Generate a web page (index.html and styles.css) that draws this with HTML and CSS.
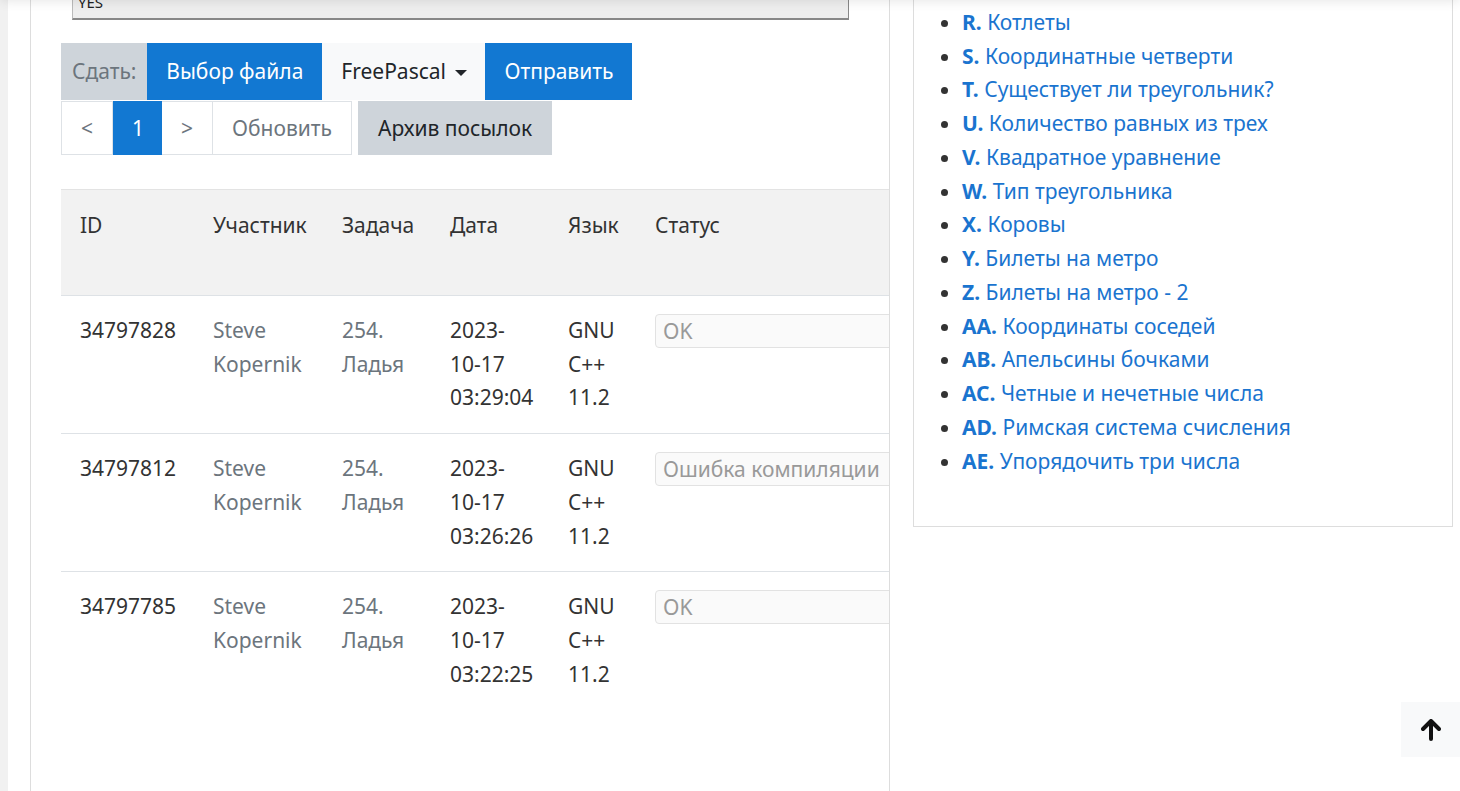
FILE: index.html
```html
<!DOCTYPE html>
<html lang="ru">
<head>
<meta charset="utf-8">
<title>Посылки</title>
<link rel="stylesheet" href="styles.css">
</head>
<body>
<div class="topbar"></div>
<div class="page">
  <main class="main">
    <div class="answer-wrap">
      <div class="answer">YES</div>
    </div>
    <div class="submit-bar">
      <span class="seg seg-label">Сдать:</span>
      <span class="seg seg-blue">Выбор файла</span>
      <span class="seg seg-light">FreePascal <span class="caret"></span></span>
      <span class="seg seg-blue">Отправить</span>
    </div>
    <div class="pager-row">
      <div class="pager">
        <span class="pg">&lt;</span>
        <span class="pg pg-active">1</span>
        <span class="pg">&gt;</span>
        <span class="pg pg-text">Обновить</span>
      </div>
      <span class="archive">Архив посылок</span>
    </div>
    <div class="table-wrap">
      <table class="runs">
        <thead>
          <tr>
            <th class="c-id">ID</th>
            <th class="c-user">Участник</th>
            <th class="c-task">Задача</th>
            <th class="c-date">Дата</th>
            <th class="c-lang">Язык</th>
            <th class="c-status">Статус</th>
          </tr>
        </thead>
        <tbody>
          <tr>
            <td>34797828</td>
            <td class="muted">Steve Kopernik</td>
            <td class="muted">254. Ладья</td>
            <td>2023-<br>10-17<br>03:29:04</td>
            <td>GNU C++ 11.2</td>
            <td><span class="status">OK</span></td>
          </tr>
          <tr>
            <td>34797812</td>
            <td class="muted">Steve Kopernik</td>
            <td class="muted">254. Ладья</td>
            <td>2023-<br>10-17<br>03:26:26</td>
            <td>GNU C++ 11.2</td>
            <td><span class="status">Ошибка компиляции</span></td>
          </tr>
          <tr>
            <td>34797785</td>
            <td class="muted">Steve Kopernik</td>
            <td class="muted">254. Ладья</td>
            <td>2023-<br>10-17<br>03:22:25</td>
            <td>GNU C++ 11.2</td>
            <td><span class="status">OK</span></td>
          </tr>
        </tbody>
      </table>
    </div>
  </main>
  <aside class="sidebar">
    <ul class="problems">
      <li><a href="#"><b>Q.</b> Делимость</a></li>
      <li><a href="#"><b>R.</b> Котлеты</a></li>
      <li><a href="#"><b>S.</b> Координатные четверти</a></li>
      <li><a href="#"><b>T.</b> Существует ли треугольник?</a></li>
      <li><a href="#"><b>U.</b> Количество равных из трех</a></li>
      <li><a href="#"><b>V.</b> Квадратное уравнение</a></li>
      <li><a href="#"><b>W.</b> Тип треугольника</a></li>
      <li><a href="#"><b>X.</b> Коровы</a></li>
      <li><a href="#"><b>Y.</b> Билеты на метро</a></li>
      <li><a href="#"><b>Z.</b> Билеты на метро - 2</a></li>
      <li><a href="#"><b>AA.</b> Координаты соседей</a></li>
      <li><a href="#"><b>AB.</b> Апельсины бочками</a></li>
      <li><a href="#"><b>AC.</b> Четные и нечетные числа</a></li>
      <li><a href="#"><b>AD.</b> Римская система счисления</a></li>
      <li><a href="#"><b>AE.</b> Упорядочить три числа</a></li>
    </ul>
  </aside>
</div>
<a class="to-top" href="#">
  <svg width="20" height="22" viewBox="0 0 20 22"><path d="M10 2 L2 10 M10 2 L18 10 M10 3 V20" stroke="#111" stroke-width="4" stroke-linecap="round" stroke-linejoin="round" fill="none"/></svg>
</a>
</body>
</html>
```
FILE: styles.css
```css
html, body {
  margin: 0;
  padding: 0;
  height: 100%;
  overflow: hidden;
}
body {
  background: #f1f1f1;
  font-family: "Noto Sans", "Open Sans", sans-serif;
  font-size: 21px;
  line-height: 33.75px;
  color: #333;
}
.topbar {
  position: fixed;
  top: -40px;
  left: 0;
  right: 0;
  height: 40px;
  background: #fff;
  box-shadow: 0 0 12px rgba(0, 0, 0, 0.12);
  z-index: 5;
}
.page {
  margin-left: 8px;
  margin-top: -60px;
  background: #fff;
  min-height: 900px;
  display: flex;
  align-items: flex-start;
  gap: 23px;
  padding-left: 22px;
}
.main {
  width: 828px;
  border-left: 1px solid #ddd;
  border-right: 1px solid #ddd;
  padding: 0 0 0 30px;
  min-height: 900px;
  overflow: hidden;
  flex: none;
}
.answer-wrap {
  padding: 20px 40px 0 11px;
}
.answer {
  width: 777px;
  height: 60px;
  background: #eee;
  border: 1px solid #bbb;
  border-right-color: #888;
  border-bottom: 2px solid #888;
  font-family: "Noto Sans", sans-serif;
  font-size: 15px;
  line-height: 16px;
  padding: 33px 5px 0;
  box-sizing: border-box;
  color: #222;
}
.submit-bar {
  margin-top: 23px;
  display: flex;
}
.seg {
  display: block;
  padding: 12px 19px;
  height: 33px;
  line-height: 33px;
  color: #fff;
}
.seg-label {
  background: #ced4da;
  color: #6c757d;
  padding: 12px 11px;
}
.seg-blue {
  background: #1278d2;
}
.seg-light {
  background: #f8f9fa;
  color: #212529;
  padding: 12px 18px 12px 19px;
}
.caret {
  display: inline-block;
  width: 0;
  height: 0;
  border-left: 6px solid transparent;
  border-right: 6px solid transparent;
  border-top: 6px solid #212529;
  vertical-align: 3px;
  margin-left: 4px;
}
.pager-row {
  display: flex;
  gap: 6px;
  margin-top: 1px;
}
.pager {
  display: flex;
}
.pg {
  display: block;
  border: 1px solid #dee2e6;
  border-left: none;
  padding: 10px 19px;
  line-height: 32px;
  color: #6c757d;
  width: 12px;
  text-align: center;
}
.pg:first-child {
  border-left: 1px solid #dee2e6;
}
.pg-active {
  background: #1278d2;
  border-color: #1278d2;
  color: #fff;
  width: 10px;
}
.pg-text {
  width: auto;
  padding: 10px 19px 10px 19px;
}
.archive {
  display: block;
  background: #ced4da;
  color: #212529;
  padding: 10px 20px;
  line-height: 34px;
}
.table-wrap {
  margin-top: 34px;
  width: 1000px;
}
.runs {
  border-collapse: collapse;
  width: 1000px;
  table-layout: fixed;
}
.runs th {
  background: #f2f2f2;
  font-weight: normal;
  text-align: left;
  vertical-align: top;
  padding: 19px 19px 52px;
  border-top: 1px solid #e3e3e3;
  border-bottom: 1px solid #dee2e6;
  color: #333;
}
.runs td {
  vertical-align: top;
  padding: 18px 19px;
  border-top: 1px solid #dee2e6;
  color: #333;
}
.runs tbody tr:first-child td {
  border-top: none;
}
.runs td.muted {
  color: #6c757d;
}
.c-id { width: 95px; }
.c-user { width: 91px; }
.c-task { width: 70px; }
.c-date { width: 80px; }
.c-lang { width: 49px; }
.c-status { width: auto; }
.status {
  display: block;
  width: 280px;
  height: 34px;
  box-sizing: border-box;
  background: #fafafa;
  border: 1px solid #e2e2e2;
  border-radius: 4px;
  color: #999;
  padding: 0 7px;
  line-height: 32px;
  white-space: nowrap;
}
.sidebar {
  width: 538px;
  border: 1px solid #ddd;
  padding: 31px 0 48px;
  min-height: 400px;
  box-sizing: content-box;
  flex: none;
}
.problems {
  margin: 0;
  padding-left: 48px;
  color: #333;
}
.problems a {
  color: #1a74cf;
  text-decoration: none;
}
.problems b {
  font-weight: bold;
}
.to-top {
  position: fixed;
  right: 0;
  bottom: 34px;
  width: 59px;
  height: 55px;
  background: #f8f9fa;
  display: flex;
  align-items: center;
  justify-content: center;
}
```
